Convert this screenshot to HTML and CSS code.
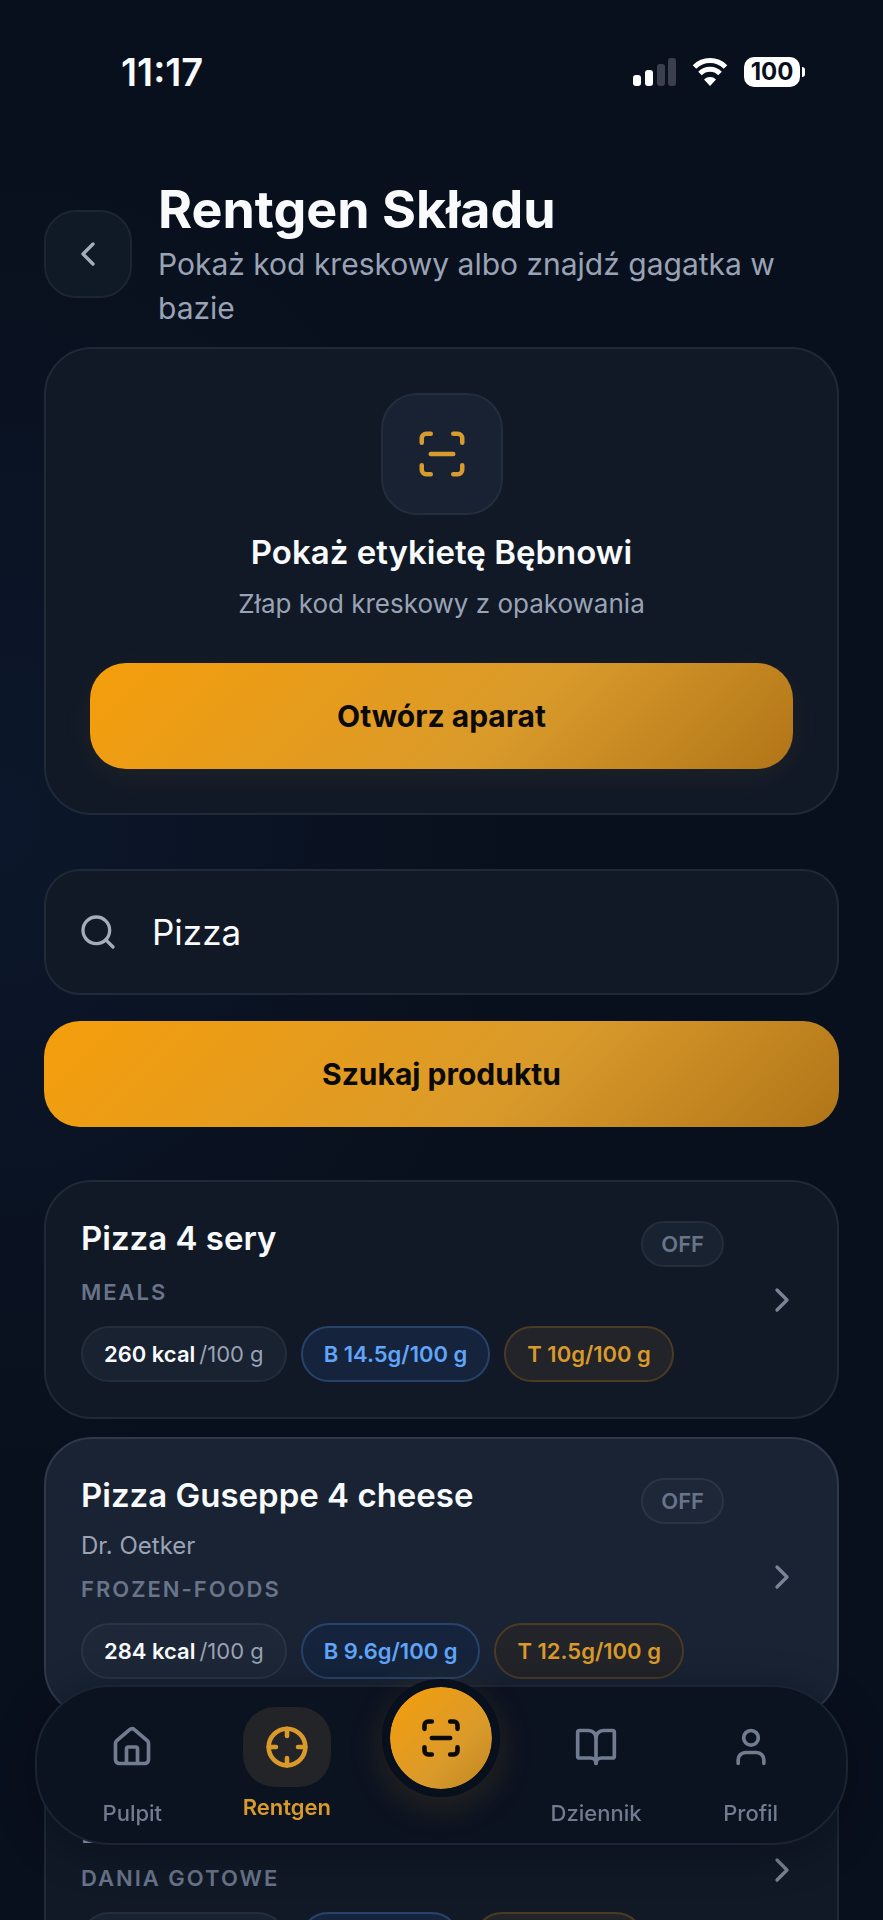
FILE: index.html
```html
<!DOCTYPE html>
<html lang="pl">
<head>
<meta charset="utf-8">
<meta name="viewport" content="width=device-width, initial-scale=1">
<title>Rentgen Składu</title>
<link rel="stylesheet" href="styles.css">
</head>
<body>
<div class="app">
	<div class="status">
		<span class="time">11:17</span>
		<div class="status-icons">
			<svg class="signal" viewBox="0 0 44 28" aria-hidden="true">
				<rect x="1" y="17" width="8" height="11" rx="3"/>
				<rect x="13" y="12" width="8" height="16" rx="3"/>
				<rect class="dim" x="25" y="6" width="8" height="22" rx="3"/>
				<rect class="dim" x="36" y="0" width="8" height="28" rx="3"/>
			</svg>
			<svg class="wifi" viewBox="0 0 36 28" aria-hidden="true">
				<path class="arc" d="M2.500 9a22 22 0 0 1 31 0M8 15.500a14 14 0 0 1 20 0"/>
				<path d="M18 28l-6-6.500a8.500 8.500 0 0 1 12 0z"/>
			</svg>
			<span class="battery">100</span>
		</div>
	</div>

	<header class="head">
		<button class="back" type="button" aria-label="Wstecz">
			<svg class="icon" viewBox="0 0 24 24"><path d="m15 18-6-6 6-6"/></svg>
		</button>
		<div class="head-text">
			<h1>Rentgen Składu</h1>
			<p>Pokaż kod kreskowy albo znajdź gagatka w bazie</p>
		</div>
	</header>

	<main>
		<section class="scan">
			<div class="scan-icon">
				<svg class="icon" viewBox="0 0 24 24"><path d="M3 7V5a2 2 0 0 1 2-2h2M17 3h2a2 2 0 0 1 2 2v2M21 17v2a2 2 0 0 1-2 2h-2M7 21H5a2 2 0 0 1-2-2v-2M7 12h10"/></svg>
			</div>
			<h2>Pokaż etykietę Bębnowi</h2>
			<p>Złap kod kreskowy z opakowania</p>
			<button class="btn glow" type="button">Otwórz aparat</button>
		</section>

		<form class="search">
			<label class="field">
				<svg class="icon" viewBox="0 0 24 24"><circle cx="11" cy="11" r="8"/><path d="m21 21-4.300-4.300"/></svg>
				<input type="text" name="q" value="Pizza" aria-label="Szukaj produktu">
			</label>
			<button class="btn" type="button">Szukaj produktu</button>
		</form>

		<div class="list">
			<a class="item" href="#p1">
				<div class="info">
					<div class="row"><h3>Pizza 4 sery</h3><span class="source">OFF</span></div>
					<div class="cat">Meals</div>
					<div class="pills">
						<span class="pill"><b>260 kcal</b><span>/100 g</span></span>
						<span class="pill blue">B 14.5g/100 g</span>
						<span class="pill gold">T 10g/100 g</span>
					</div>
				</div>
				<svg class="icon" viewBox="0 0 24 24"><path d="m9 18 6-6-6-6"/></svg>
			</a>
			<a class="item on" href="#p2">
				<div class="info">
					<div class="row"><h3>Pizza Guseppe 4 cheese</h3><span class="source">OFF</span></div>
					<div class="brand">Dr. Oetker</div>
					<div class="cat">Frozen-foods</div>
					<div class="pills">
						<span class="pill"><b>284 kcal</b><span>/100 g</span></span>
						<span class="pill blue">B 9.6g/100 g</span>
						<span class="pill gold">T 12.5g/100 g</span>
					</div>
				</div>
				<svg class="icon" viewBox="0 0 24 24"><path d="m9 18 6-6-6-6"/></svg>
			</a>
			<a class="item" href="#p3">
				<div class="info">
					<div class="row"><h3>Pizza</h3></div>
					<div class="brand">Biedronka</div>
					<div class="cat">Dania gotowe</div>
					<div class="pills">
						<span class="pill"><b>250 kcal</b><span>/100 g</span></span>
						<span class="pill blue">B 9g/100 g</span>
						<span class="pill gold">T 10g/100 g</span>
					</div>
				</div>
				<svg class="icon" viewBox="0 0 24 24"><path d="m9 18 6-6-6-6"/></svg>
			</a>
		</div>
	</main>
</div>

<nav class="nav">
	<a href="#pulpit">
		<span class="tile"><svg class="icon" viewBox="0 0 24 24"><path d="M15 21v-8a1 1 0 0 0-1-1h-4a1 1 0 0 0-1 1v8"/><path d="M3 10a2 2 0 0 1 .709-1.528l7-6a2 2 0 0 1 2.582 0l7 6A2 2 0 0 1 21 10v9a2 2 0 0 1-2 2H5a2 2 0 0 1-2-2z"/></svg></span>
		<span>Pulpit</span>
	</a>
	<a class="active" href="#rentgen">
		<span class="tile"><svg class="icon" viewBox="0 0 24 24"><circle cx="12" cy="12" r="10"/><path d="M22 12h-4M6 12H2M12 6V2M12 22v-4"/></svg></span>
		<span>Rentgen</span>
	</a>
	<div class="mid">
		<button class="fab" type="button" aria-label="Skanuj">
			<svg class="icon" viewBox="0 0 24 24"><path d="M3 7V5a2 2 0 0 1 2-2h2M17 3h2a2 2 0 0 1 2 2v2M21 17v2a2 2 0 0 1-2 2h-2M7 21H5a2 2 0 0 1-2-2v-2M7 12h10"/></svg>
		</button>
	</div>
	<a href="#dziennik">
		<span class="tile"><svg class="icon" viewBox="0 0 24 24"><path d="M12 7v14"/><path d="M3 18a1 1 0 0 1-1-1V4a1 1 0 0 1 1-1h5a4 4 0 0 1 4 4 4 4 0 0 1 4-4h5a1 1 0 0 1 1 1v13a1 1 0 0 1-1 1h-6a3 3 0 0 0-3 3 3 3 0 0 0-3-3z"/></svg></span>
		<span>Dziennik</span>
	</a>
	<a href="#profil">
		<span class="tile"><svg class="icon" viewBox="0 0 24 24"><path d="M19 21v-2a4 4 0 0 0-4-4H9a4 4 0 0 0-4 4v2"/><circle cx="12" cy="7" r="4"/></svg></span>
		<span>Profil</span>
	</a>
</nav>
</body>
</html>
```

FILE: styles.css
```css
* {box-sizing:border-box;margin:0;padding:0;}
html,body {height:100%;}
body {background:#08101d;color:#f8fafc;font-family:Inter,"Liberation Sans",sans-serif;overflow:hidden;}
button,input {font:inherit;color:inherit;border:0;background:none;}
a {color:inherit;text-decoration:none;}

.app {height:100vh;overflow-y:auto;scrollbar-width:none;padding:0 44px;background:radial-gradient(ellipse 500px 640px at 0 820px,#0c172b,transparent),#09101d;}
.icon {width:40px;height:40px;flex:none;fill:none;stroke:currentColor;stroke-width:2;stroke-linecap:round;stroke-linejoin:round;}

/* status bar */
.status {display:flex;justify-content:space-between;align-items:center;height:144px;padding:0 34px 0 77px;}
.time {font-size:38px;font-weight:600;}
.status-icons {display:flex;align-items:center;gap:16px;}
.status svg {height:28px;fill:#fff;}
.signal {width:44px;}
.signal .dim {fill:#3b404c;}
.wifi {width:36px;}
.wifi .arc {fill:none;stroke:#fff;stroke-width:5;}
.battery {position:relative;width:56px;height:30px;margin-right:5px;border-radius:10px;background:#fff;color:#09101d;font-size:24px;line-height:30px;font-weight:700;text-align:center;}
.battery:after {content:"";position:absolute;right:-5px;top:10px;width:3px;height:10px;border-radius:0 4px 4px 0;background:#fff;}

/* header */
.head {display:flex;align-items:center;gap:26px;padding-top:34px;margin-bottom:17px;}
.back {display:flex;align-items:center;justify-content:center;flex:none;width:88px;height:88px;border:2px solid #1b2533;border-radius:32px;background:#101926;color:#a5adbd;}
.head h1 {font-size:52px;line-height:64px;font-weight:700;}
.head p {font-size:30px;line-height:44px;color:#9aa3b5;}

/* scanner card */
.scan {display:flex;flex-direction:column;align-items:center;padding:44px;border:2px solid #1f2937;border-radius:48px;background:#111927;text-align:center;}
.scan-icon {display:flex;align-items:center;justify-content:center;width:122px;height:122px;border:2px solid #222d3e;border-radius:36px;background:#182233;color:#d79b2e;}
.scan-icon .icon {width:54px;height:54px;}
.scan h2 {margin-top:15px;font-size:33px;line-height:44px;font-weight:600;}
.scan p {margin:12px 0 41px;font-size:26px;line-height:36px;color:#9aa3b5;}
.btn {display:block;width:100%;height:106px;border-radius:36px;background:linear-gradient(135deg,#f59e0b,#d99a2b 60%,#b07518);color:#0a0a0a;font-size:30px;font-weight:700;}
.glow {box-shadow:0 8px 30px rgba(217,154,43,.07);}

/* search */
.search {margin:54px 0 53px;}
.field {display:flex;align-items:center;gap:34px;height:126px;margin-bottom:26px;padding:0 32px;border:2px solid #1f2937;border-radius:36px;background:#111927;}
.field .icon {color:#a5adbd;}
.field input {flex:1;min-width:0;font-size:35px;outline:0;}

/* results */
.list {display:flex;flex-direction:column;gap:18px;}
.item {display:flex;align-items:center;gap:38px;padding:35px;border:2px solid #1f2937;border-radius:48px;background:#111927;}
.item.on {background:#192334;border-color:#2f394a;}
.item .icon {color:#7b8496;}
.info {flex:1;min-width:0;}
.row {display:flex;justify-content:space-between;align-items:flex-end;margin-bottom:2px;}
.row h3 {align-self:flex-start;font-size:33px;line-height:42px;font-weight:600;}
.source {height:46px;margin-top:4px;padding:0 18px;border:2px solid #232d3c;border-radius:23px;background:#182231;color:#69748a;font-size:22px;line-height:42px;font-weight:600;}
.item.on .source {background:#1d2737;border-color:#293445;}
.item.on .pill:first-child {background:#1d2737;border-color:#293445;}
.brand {margin-top:2px;font-size:24px;line-height:40px;color:#9aa3b5;}
.cat {font-size:22px;line-height:46px;font-weight:600;letter-spacing:2px;text-transform:uppercase;color:#69748a;}
.pills {display:flex;gap:14px;margin-top:11px;}
.pill {display:flex;gap:4px;height:56px;padding:0 21px;border:2px solid #232d3c;border-radius:28px;background:#182231;color:#9aa3b5;font-size:22px;line-height:52px;white-space:nowrap;}
.pill b {color:#f8fafc;font-weight:600;}
.blue {border-color:#28436b;background:#15243c;color:#60a5fa;font-weight:600;}
.gold {border-color:#4b3b22;background:#222429;color:#d99a2b;font-weight:600;}

/* bottom bar lies over the list */
.nav {position:fixed;left:35px;right:35px;bottom:75px;display:flex;height:160px;padding:20px 18px 0;border:2px solid #1b2433;border-radius:76px;background:#0b1220;box-shadow:0 8px 40px rgba(4,8,16,.4);}
.nav a,.mid {flex:1;display:flex;flex-direction:column;align-items:center;font-size:22px;line-height:30px;font-weight:500;color:#727c90;}
.nav .icon {width:44px;height:44px;}
.tile {display:flex;align-items:center;justify-content:center;width:88px;height:80px;margin-bottom:11px;border-radius:32px;}
.nav .active {color:#d99a2b;font-weight:600;}
.active .tile {margin-bottom:5px;background:#222427;}
.nav .active .icon,.fab .icon {stroke-width:2.5;}
.fab {display:flex;align-items:center;justify-content:center;flex:none;width:118px;height:118px;margin-top:-28px;border:8px solid #07101c;border-radius:50%;background:linear-gradient(135deg,#f59e0b,#d99a2b 65%,#c08520) padding-box;color:#0a0a0a;box-shadow:0 10px 36px rgba(217,154,43,.15);}
```
